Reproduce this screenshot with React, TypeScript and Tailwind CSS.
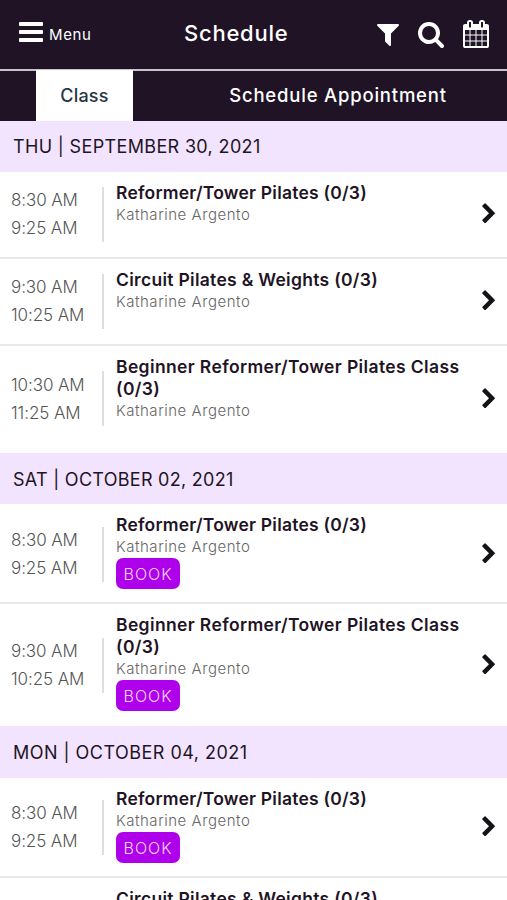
import React from 'react'
import { clsx } from 'clsx'

type ClassItem = {
  start: string
  end: string
  name: string
  teacher: string
  bookable?: boolean
  height: string
  tracking: string
  offset?: string
}

type Day = {
  label: string
  className: string
  classes: ClassItem[]
}

const days: Day[] = [
  {
    label: 'THU | SEPTEMBER 30, 2021',
    className: 'h-[51px] tracking-[0.35px]',
    classes: [
      { start: '8:30 AM', end: '9:25 AM', name: 'Reformer/Tower Pilates (0/3)', teacher: 'Katharine Argento', height: 'h-[87px]', tracking: 'tracking-[0.22px]', offset: 'pb-px' },
      { start: '9:30 AM', end: '10:25 AM', name: 'Circuit Pilates & Weights (0/3)', teacher: 'Katharine Argento', height: 'h-[87px]', tracking: 'tracking-[0.29px]', offset: 'pb-px' },
      { start: '10:30 AM', end: '11:25 AM', name: 'Beginner Reformer/Tower Pilates Class (0/3)', teacher: 'Katharine Argento', height: 'h-[107px]', tracking: 'tracking-[0.37px]', offset: 'pb-0.5' },
    ],
  },
  {
    label: 'SAT | OCTOBER 02, 2021',
    className: 'h-[51px] pt-0.5 tracking-[0.28px]',
    classes: [
      { start: '8:30 AM', end: '9:25 AM', name: 'Reformer/Tower Pilates (0/3)', teacher: 'Katharine Argento', bookable: true, height: 'h-[100px]', tracking: 'tracking-[0.22px]', offset: 'pt-0.5' },
      { start: '9:30 AM', end: '10:25 AM', name: 'Beginner Reformer/Tower Pilates Class (0/3)', teacher: 'Katharine Argento', bookable: true, height: 'h-[122px]', tracking: 'tracking-[0.37px]' },
    ],
  },
  {
    label: 'MON | OCTOBER 04, 2021',
    className: 'h-[52px] tracking-[0.48px]',
    classes: [
      { start: '8:30 AM', end: '9:25 AM', name: 'Reformer/Tower Pilates (0/3)', teacher: 'Katharine Argento', bookable: true, height: 'h-[100px]', tracking: 'tracking-[0.22px]' },
      { start: '9:30 AM', end: '10:25 AM', name: 'Circuit Pilates & Weights (0/3)', teacher: 'Katharine Argento', bookable: true, height: 'h-[100px]', tracking: 'tracking-[0.29px]' },
    ],
  },
]

const icons = {
  bars: 'M1664 1344v128q0 26-19 45t-45 19h-1408q-26 0-45-19t-19-45v-128q0-26 19-45t45-19h1408q26 0 45 19t19 45zm0-512v128q0 26-19 45t-45 19h-1408q-26 0-45-19t-19-45v-128q0-26 19-45t45-19h1408q26 0 45 19t19 45zm0-512v128q0 26-19 45t-45 19h-1408q-26 0-45-19t-19-45v-128q0-26 19-45t45-19h1408q26 0 45 19t19 45z',
  filter: 'M1595 295q17 41-14 70l-493 493v742q0 42-39 59-13 5-25 5-27 0-45-19l-256-256q-19-19-19-45v-486l-493-493q-31-29-14-70 17-39 59-39h1280q42 0 59 39z',
  search: 'M1216 832q0-185-131.500-316.500t-316.500-131.500-316.500 131.500-131.500 316.500 131.500 316.500 316.500 131.500 316.500-131.500 131.500-316.500zm512 832q0 52-38 90t-90 38q-54 0-90-38l-343-342q-179 124-399 124-143 0-273.500-55.500t-225-150-150-225-55.500-273.500 55.500-273.500 150-225 225-150 273.500-55.500 273.500 55.500 225 150 150 225 55.500 273.500q0 220-124 399l343 343q37 37 37 90z',
  calendar: 'M192 1664h288v-288h-288v288zm352 0h320v-288h-320v288zm-352-352h288v-320h-288v320zm352 0h320v-320h-320v320zm-352-384h288v-288h-288v288zm736 736h320v-288h-320v288zm-384-736h320v-288h-320v288zm768 736h288v-288h-288v288zm-384-352h320v-320h-320v320zm-352-864v-288q0-13-9.500-22.500t-22.500-9.500h-64q-13 0-22.500 9.500t-9.500 22.500v288q0 13 9.500 22.500t22.500 9.500h64q13 0 22.500-9.500t9.500-22.500zm736 864h288v-320h-288v320zm-384-384h320v-288h-320v288zm384 0h288v-288h-288v288zm32-480v-288q0-13-9.500-22.500t-22.500-9.500h-64q-13 0-22.500 9.500t-9.500 22.500v288q0 13 9.500 22.500t22.500 9.500h64q13 0 22.500-9.500t9.500-22.500zm384-64v1280q0 52-38 90t-90 38h-1408q-52 0-90-38t-38-90v-1280q0-52 38-90t90-38h128v-96q0-66 47-113t113-47h64q66 0 113 47t47 113v96h384v-96q0-66 47-113t113-47h64q66 0 113 47t47 113v96h128q52 0 90 38t38 90z',
  chevron: 'M1363 877l-742 742q-19 19-45 19t-45-19l-166-166q-19-19-19-45t19-45l531-531-531-531q-19-19-19-45t19-45l166-166q19-19 45-19t45 19l742 742q19 19 19 45t-19 45z',
}

const Icon = ({ name, className }: { name: keyof typeof icons; className?: string }) => (
  <svg viewBox="0 0 1792 1792" fill="currentColor" className={clsx('shrink-0', className)}>
    <path d={icons[name]} />
  </svg>
)

const Header = () => (
  <header className="grid h-[69px] grid-cols-[184px_1fr_auto] pr-[17px] text-white">
    <button className="flex items-start pt-[18px] pl-[17px]">
      <Icon name="bars" className="h-7 w-7" />
      <span className="pt-[5px] pl-1 text-[15px] leading-6 tracking-[0.6px]">Menu</span>
    </button>
    <h1 className="pt-[18px] text-[22px] leading-[30px] font-medium tracking-[0.75px]">Schedule</h1>
    <div className="flex items-start pt-5">
      <Icon name="filter" className="h-7 w-7" />
      <Icon name="search" className="ml-[15px] h-7 w-7" />
      <Icon name="calendar" className="ml-[17px] h-7 w-7" />
    </div>
  </header>
)

const Tabs = () => (
  <nav className="flex h-[52px] border-t-2 border-[#c9c4cc] pl-9 text-[18px] font-medium">
    <button className="-mt-px h-[51px] w-[97px] bg-white tracking-[0.2px] text-[#263645]">Class</button>
    <button className="w-[374px] pl-[36px] text-center text-[18.5px] tracking-[0.8px] text-white">Schedule Appointment</button>
  </nav>
)

const ClassRow = ({ item, last }: { item: ClassItem; last: boolean }) => (
  <div className={clsx('flex border-[#e8e8e8]', item.height, !last && 'border-b-2')}>
    <div className={clsx('flex w-[104px] items-center', item.offset)}>
      <div className="flex h-[55px] w-full flex-col justify-center border-r-2 border-[#dedede] pl-[11px] text-[17px] leading-7 font-light tracking-[-0.1px] text-[#555]">
        <span>{item.start}</span>
        <span>{item.end}</span>
      </div>
    </div>
    <div className="w-[356px] pt-2.5 pl-3">
      <h3 className={clsx('text-[17.5px] leading-[22px] font-semibold text-[#1f1425]', item.tracking)}>{item.name}</h3>
      <p className="text-[15px] leading-[22px] font-light tracking-[0.53px] text-[#666]">{item.teacher}</p>
      {item.bookable && (
        <button className="block h-[31px] w-16 rounded-[7px] bg-[#ae00eb] text-[16px] font-light tracking-[1px] text-[#fbd9ff]">
          BOOK
        </button>
      )}
    </div>
    <div className={clsx('flex flex-1 items-center pl-[18px]', item.offset)}>
      <Icon name="chevron" className="h-[22px] w-[22px] text-[#141216]" />
    </div>
  </div>
)

const App = () => {
  return (
    <div className="h-[900px] w-[507px] overflow-hidden bg-white font-['Inter',sans-serif] text-[#1f1425]">
      <div className="bg-[#201326]">
        <Header />
        <Tabs />
      </div>
      {days.map((day) => (
        <section key={day.label}>
          <h2 className={clsx('flex items-center bg-[#f2e4fe] pl-[13px] text-[18px]', day.className)}>
            {day.label}
          </h2>
          {day.classes.map((item, index) => (
            <ClassRow key={index} item={item} last={index === day.classes.length - 1} />
          ))}
        </section>
      ))}
    </div>
  )
}

export default App
